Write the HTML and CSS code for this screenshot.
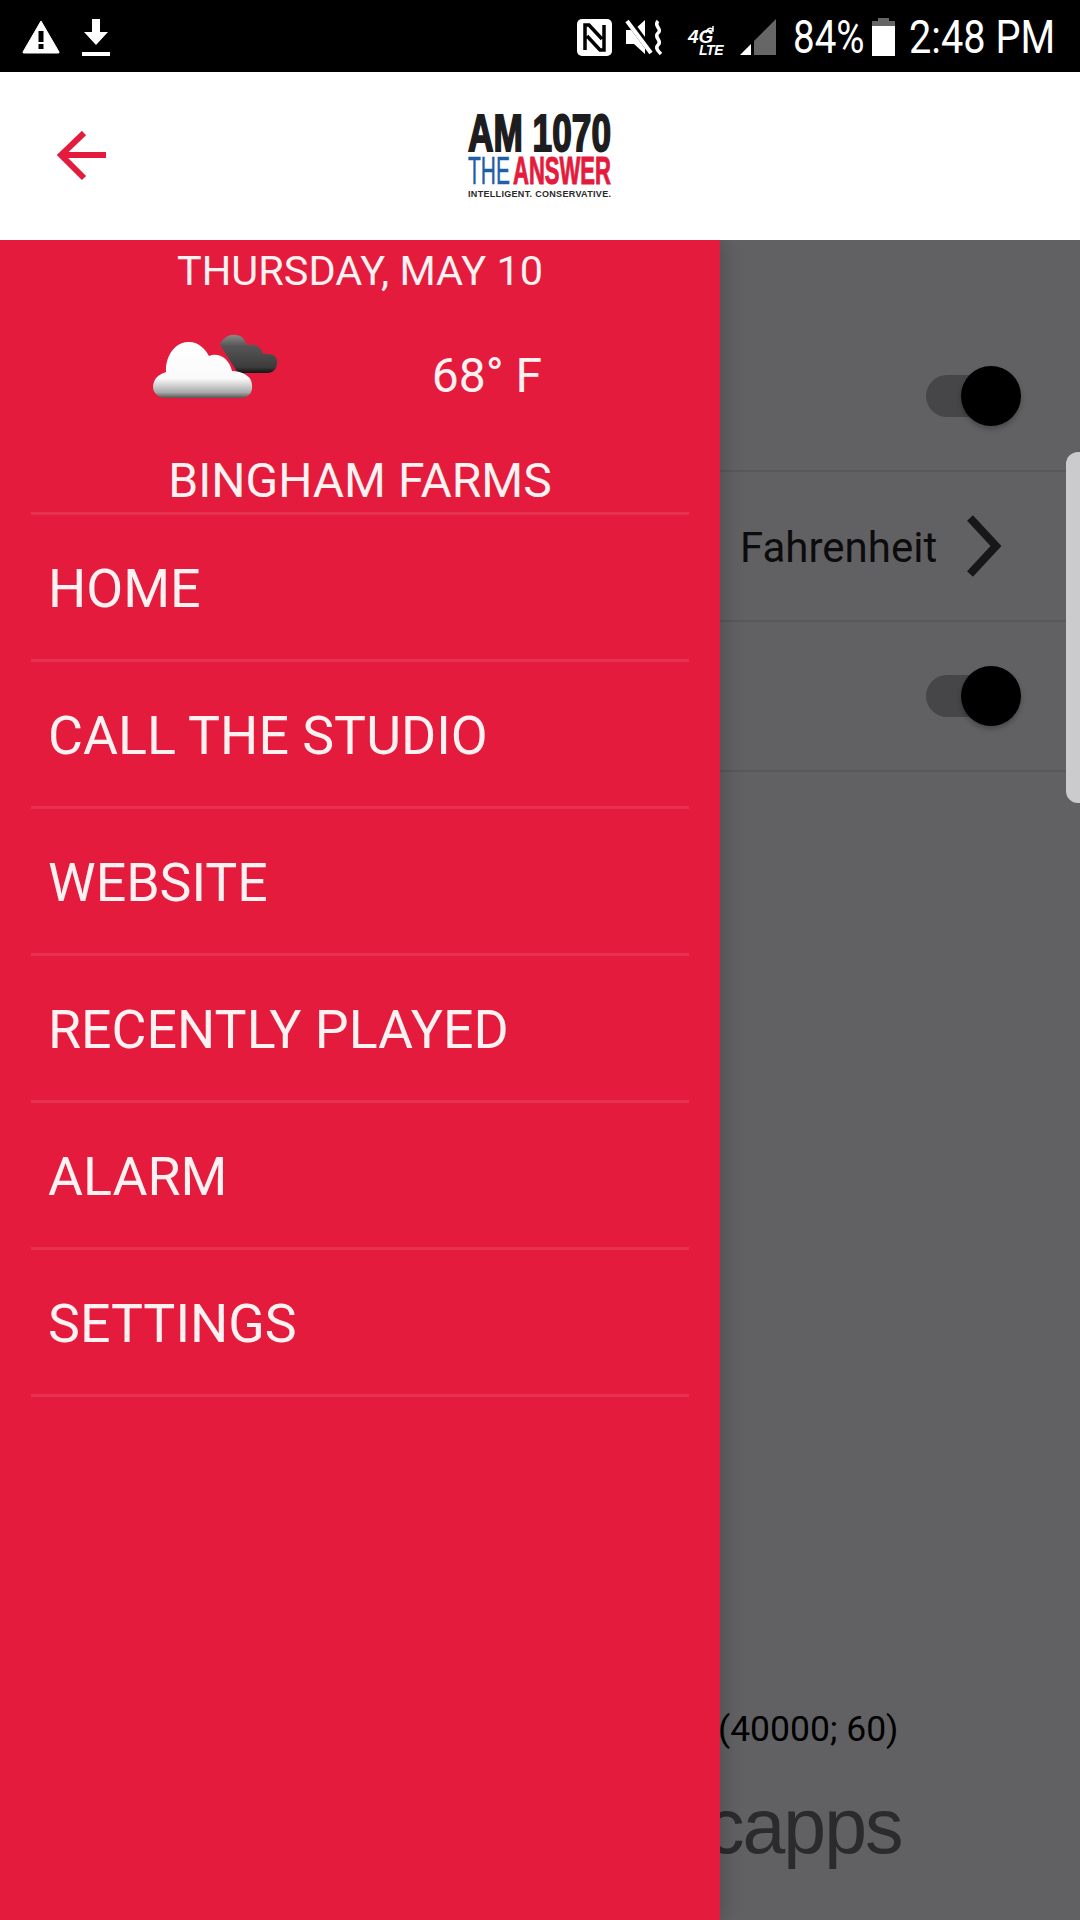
FILE: index.html
```html
<!DOCTYPE html>
<html lang="en">
<head>
  <meta charset="UTF-8">
  <meta name="viewport" content="width=device-width, initial-scale=1.0">
  <title>AM 1070 The Answer</title>
  <link rel="stylesheet" href="styles.css">
</head>
<body>
  <div class="statusbar">
    <div class="status-left">
      <svg class="ic-warn" viewBox="0 0 38 34"><path d="M19 1 L37 32 Q37.500 33 36 33 L2 33 Q.5 33 1 32 Z" fill="#fff" stroke="#fff" stroke-linejoin="round"/><rect x="16.500" y="11" width="5" height="11" fill="#000"/><rect x="16.500" y="24" width="5" height="5" fill="#000"/></svg>
      <svg class="ic-download" viewBox="0 0 28 37"><path d="M10 0 H18 V13 H26 L14 26 L2 13 H10 Z" fill="#fff"/><rect x="0" y="33" width="28" height="4" fill="#fff"/></svg>
    </div>
    <div class="status-right">
      <svg class="ic-nfc" viewBox="0 0 35 37"><rect width="35" height="37" rx="5" fill="#fff"/><path d="M8 31 V6 H12 L25 20 M27 6 V31 H23 L10 17" fill="none" stroke="#000" stroke-width="3.500"/></svg>
      <svg class="ic-mute" viewBox="0 0 38 38"><path d="M1 12 H9 L20 2 V36 L9 26 H1 Z" fill="#fff"/><path d="M3 2 L27 34" stroke="#000" stroke-width="7"/><path d="M2 3 L26 35" stroke="#fff" stroke-width="4"/><path d="M33 3 C28 8 38 11 33 15 C28 19 38 23 33 27 C30 30 33 33 36 36" fill="none" stroke="#fff" stroke-width="3.500"/></svg>
      <div class="net">
        <span class="net-4g">4G</span>
        <span class="net-lte">LTE</span>
        <svg class="net-arrow" viewBox="0 0 10 8"><path d="M1 7 C2 2 6 1 8 4 M8 0 V5 H4" fill="none" stroke="#fff" stroke-width="1.500"/></svg>
      </div>
      <svg class="ic-signal" viewBox="0 0 36 36"><path d="M36 0 V36 H14 V22 Z" fill="#666"/><path d="M0 36 L11 25 V36 Z" fill="#fff"/></svg>
      <span class="status-text pct">84%</span>
      <svg class="ic-battery" viewBox="0 0 23 38"><rect x="6" y="0" width="11" height="4" fill="#666"/><rect x="0" y="3" width="23" height="5" fill="#666"/><rect x="0" y="8" width="23" height="30" fill="#fff"/></svg>
      <span class="status-text clock">2:48 PM</span>
    </div>
  </div>

  <div class="topbar">
    <svg class="back" viewBox="0 0 50 50"><path d="M49 24 H5 M27 2 L4 24 L27 47" fill="none" stroke="#e41b3c" stroke-width="6"/></svg>
    <svg class="logo" viewBox="0 0 146 86">
      <text class="logo-am" x="1" y="38" textLength="143" lengthAdjust="spacingAndGlyphs">AM 1070</text>
      <text class="logo-the" x="1" y="71" textLength="42" lengthAdjust="spacingAndGlyphs">THE</text>
      <text class="logo-answer" x="46" y="71" textLength="98" lengthAdjust="spacingAndGlyphs">ANSWER</text>
      <text class="logo-tag" x="1" y="84" textLength="143" lengthAdjust="spacing">INTELLIGENT. CONSERVATIVE.</text>
    </svg>
  </div>

  <div class="content">
    <div class="settings">
      <div class="setting">
        <div class="toggle"><div class="thumb"></div></div>
      </div>
      <div class="setting">
        <span class="setting-value">Fahrenheit</span>
        <svg class="chevron" viewBox="0 0 36 62"><path d="M4 3 L30 31 L4 59" fill="none" stroke="#171618" stroke-width="8"/></svg>
      </div>
      <div class="setting">
        <div class="toggle"><div class="thumb"></div></div>
      </div>
      <div class="about">
        <div class="version">(40000; 60)</div>
        <div class="capps">capps</div>
      </div>
    </div>

    <div class="scroll-tab"></div>

    <div class="drawer">
      <div class="date">THURSDAY, MAY 10</div>
      <div class="weather">
        <svg class="cloud" viewBox="0 0 126 66">
          <defs>
            <linearGradient id="cloudWhite" x1="0" y1="0" x2="0" y2="1">
              <stop offset="0" stop-color="#fff"/>
              <stop offset=".65" stop-color="#fafafa"/>
              <stop offset=".9" stop-color="#aaa"/>
              <stop offset="1" stop-color="#555"/>
            </linearGradient>
            <linearGradient id="cloudDark" x1="0" y1="0" x2="0" y2="1">
              <stop offset="0" stop-color="#8a8a8a"/>
              <stop offset=".3" stop-color="#555"/>
              <stop offset=".85" stop-color="#3c3c3c"/>
              <stop offset="1" stop-color="#111"/>
            </linearGradient>
          </defs>
          <path d="M67 12 C69 3 82 -2 90 5 C92 8 93 10 94 12 C102 10 108 14 110 21 C120 20 125 24 124 30 C124 36 120 40 114 40 L85 40 Z" fill="url(#cloudDark)"/>
          <path d="M12 65 C2 64 -2 56 1 49 C3 43 8 41 13 39 C12 24 22 8 36 9 C46 9 53 17 56 23 C64 19 76 24 79 38 C87 38 99 42 99 52 C100 60 95 65 88 65 Z" fill="url(#cloudWhite)"/>
        </svg>
        <span class="temp">68° F</span>
      </div>
      <div class="location">BINGHAM FARMS</div>
      <ul class="menu">
        <li>HOME</li>
        <li>CALL THE STUDIO</li>
        <li>WEBSITE</li>
        <li>RECENTLY PLAYED</li>
        <li>ALARM</li>
        <li>SETTINGS</li>
      </ul>
    </div>
  </div>
</body>
</html>
```

FILE: styles.css
```css
* {
  box-sizing: border-box;
}
body {
  margin: 0;
  width: 1080px;
  height: 1920px;
  overflow: hidden;
  font-family: Roboto, sans-serif;
  background: #616063;
}

.statusbar {
  height: 72px;
  background: #000;
  display: flex;
  justify-content: space-between;
  align-items: center;
  padding: 2px 28px 0 22px;
}
.status-left, .status-right {
  display: flex;
  align-items: center;
}
.ic-warn {
  width: 38px;
  height: 34px;
  margin-right: 22px;
}
.ic-download {
  width: 28px;
  height: 37px;
}
.ic-nfc {
  width: 35px;
  height: 37px;
  margin-right: 13px;
}
.ic-mute {
  width: 38px;
  height: 38px;
  margin-right: 25px;
}
.net {
  position: relative;
  width: 35px;
  height: 27px;
  margin-top: 12px;
  margin-right: 17px;
  color: #fff;
  font-family: "Liberation Sans", sans-serif;
  font-weight: 700;
  font-style: italic;
  display: flex;
  flex-direction: column;
  align-items: flex-end;
  line-height: 1;
}
.net-4g {
  font-size: 19px;
  height: 14px;
  line-height: 14px;
  align-self: flex-start;
}
.net-lte {
  font-size: 14px;
  line-height: 13px;
  letter-spacing: -0.5px;
}
.net-arrow {
  position: absolute;
  left: 17px;
  top: -4px;
  width: 10px;
  height: 8px;
}
.ic-signal {
  width: 36px;
  height: 36px;
  margin-right: 17px;
}
/* the clock face is narrower than Roboto, so squeeze it into a fixed box */
.status-text {
  color: #fff;
  font-size: 47px;
  line-height: 50px;
  white-space: nowrap;
  transform-origin: left center;
}
.pct {
  width: 69px;
  margin-right: 10px;
  transform: scaleX(0.82);
}
.ic-battery {
  width: 23px;
  height: 38px;
  margin-right: 14px;
}
.clock {
  width: 143px;
  transform: scaleX(0.845);
}

.topbar {
  height: 168px;
  background: #fff;
  display: flex;
  align-items: center;
  justify-content: center;
  position: relative;
}
.back {
  position: absolute;
  left: 57px;
  top: 59px;
  width: 50px;
  height: 50px;
}
.logo {
  width: 146px;
  height: 86px;
  margin-top: -1px;
  overflow: visible;
}
.logo text {
  font-family: "Liberation Sans", sans-serif;
  font-weight: 700;
}
.logo-am {
  font-size: 52px;
  fill: #1d1c1e;
  stroke: #1d1c1e;
  stroke-width: 2px;
}
.logo-the {
  font-size: 39px;
  font-weight: 400 !important;
  fill: #1f5ea8;
  stroke: #1f5ea8;
  stroke-width: 0.5px;
}
.logo-answer {
  font-size: 39px;
  fill: #e41b3c;
  stroke: #e41b3c;
  stroke-width: 1px;
}
.logo-tag {
  font-size: 9px;
  fill: #29282a;
}

.content {
  position: relative;
  height: 1680px;
  overflow: hidden;
}
.settings {
  padding: 82px 0 0 720px;
}
.setting {
  height: 150px;
  border-bottom: 2px solid #58575a;
  display: flex;
  align-items: center;
  justify-content: flex-end;
  padding: 0 70px 0 20px;
}
.toggle {
  position: relative;
  width: 84px;
  height: 42px;
  border-radius: 21px;
  background: #464548;
}
.thumb {
  position: absolute;
  right: -11px;
  top: -9px;
  width: 60px;
  height: 60px;
  border-radius: 50%;
  background: #000;
  box-shadow: 0 3px 5px rgba(0, 0, 0, 0.25);
}
.setting-value {
  font-size: 42px;
  color: #0c0c0d;
  margin-right: auto;
  padding-top: 3px;
}
.chevron {
  width: 36px;
  height: 62px;
  margin-right: 8px;
}
.about {
  padding-top: 935px;
}
.version {
  font-size: 35.500px;
  line-height: 44px;
  margin-left: -2px;
  color: #000;
}
.capps {
  font-family: "Liberation Sans", sans-serif;
  font-size: 77px;
  line-height: 90px;
  letter-spacing: -2px;
  margin-top: 30px;
  margin-left: -14px;
  color: #2b2a2c;
}
.scroll-tab {
  position: absolute;
  right: 0;
  top: 212px;
  width: 14px;
  height: 351px;
  background: #cbcacd;
  border-radius: 12px 0 0 12px;
}

.drawer {
  position: absolute;
  left: 0;
  top: 0;
  width: 720px;
  height: 1680px;
  background: #e41b3c;
  color: #fdf1f1;
  padding: 0 31px;
  box-shadow: 6px 0 16px rgba(0, 0, 0, 0.15);
}
.date {
  text-align: center;
  font-size: 41.500px;
  line-height: 48px;
  margin-top: 7px;
}
.weather {
  display: flex;
  align-items: center;
  justify-content: space-between;
  height: 160px;
  padding: 0 147px 0 122px;
}
.cloud {
  width: 126px;
  height: 66px;
  margin-bottom: 18px;
}
.temp {
  font-size: 48px;
}
.location {
  text-align: center;
  font-size: 48px;
  line-height: 54px;
  padding-top: 13px;
  height: 74px;
  margin-top: -14px;
  border-bottom: 3px solid rgba(255, 255, 255, 0.1);
}
.menu {
  list-style: none;
  margin: 0;
  padding: 0;
}
.menu li {
  height: 147px;
  display: flex;
  align-items: center;
  padding: 2px 0 0 17px;
  font-size: 53.700px;
  border-bottom: 3px solid rgba(255, 255, 255, 0.1);
}
```
